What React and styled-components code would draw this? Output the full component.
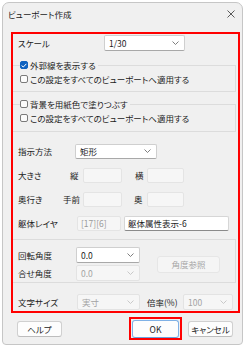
import styled, { createGlobalStyle } from "styled-components";

const GlobalStyle = createGlobalStyle`
  html, body {
    margin: 0;
    background: #ffffff;
  }
  body {
    font-family: "Noto Sans CJK JP", "Noto Sans", sans-serif;
    font-feature-settings: "palt";
    font-size: 8.5px;
    color: #1b1b1b;
  }
`;

const Window = styled.div`
  margin: 2px 0 0 2px;
  width: 241px;
  height: 343px;
  box-sizing: border-box;
  border: 1px solid #c6c6c6;
  border-radius: 7px 7px 4px 4px;
  background: #f0f0f0;
  display: flex;
  flex-direction: column;
  overflow: hidden;
`;

const TitleBar = styled.div`
  height: 29px;
  flex: none;
  display: flex;
  align-items: flex-start;
  justify-content: space-between;
  padding: 4px 6px 0 5px;
  box-sizing: border-box;
`;

const Title = styled.div`
  line-height: 14px;
  font-size: 8.5px;
`;

const CloseButton = styled.div`
  width: 10px;
  height: 10px;
  margin-top: 2px;
  display: flex;
  align-items: center;
  justify-content: center;
`;

const Highlight = styled.div`
  margin-left: 8px;
  width: 229px;
  box-sizing: border-box;
  border: 2px solid #ff0000;
  padding-bottom: 1px;
  display: flex;
  flex-direction: column;
`;

const Row = styled.div`
  display: flex;
  align-items: center;
  height: 16px;
  padding-left: 5px;
  margin-top: ${(p) => p.$top || 0}px;
`;

const Label = styled.span`
  width: ${(p) => p.$w}px;
  flex: none;
  margin-left: ${(p) => p.$ml || 0}px;
  white-space: nowrap;
  line-height: 14px;
`;

const Group = styled.fieldset`
  margin: ${(p) => p.$top}px 2px 0 0;
  padding: 0 0 ${(p) => p.$bottom}px 7px;
  border: 1px solid #dcdcdc;
  border-left: none;
  min-width: 0;
`;

const Legend = styled.legend`
  padding: 0 2px 0 0;
  height: 14px;
  display: flex;
  align-items: center;
`;

const CheckRow = styled.label`
  display: flex;
  align-items: center;
  height: 14px;
  white-space: nowrap;
`;

const Box = styled.span`
  width: 8px;
  height: 8px;
  flex: none;
  box-sizing: border-box;
  border-radius: 2px;
  margin-right: 2px;
  border: 1px solid ${(p) => (p.$checked ? "#0f62c0" : "#7a7a7a")};
  background: ${(p) => (p.$checked ? "#0f62c0" : "#fbfbfb")};
  display: flex;
  align-items: center;
  justify-content: center;
`;

const FormRows = styled.div`
  display: flex;
  flex-direction: column;
  gap: 8px;
  margin-top: 11px;
`;

const SelectBox = styled.div`
  width: ${(p) => p.$w}px;
  height: ${(p) => p.$h || 16}px;
  flex: none;
  box-sizing: border-box;
  display: flex;
  align-items: center;
  justify-content: space-between;
  padding: 0 5px 0 4px;
  border-radius: 2px;
  border: 1px solid ${(p) => (p.$disabled ? "#e3e3e3" : "#cfcfcf")};
  border-bottom-color: ${(p) => (p.$disabled ? "#e3e3e3" : "#a8a8a8")};
  background: ${(p) => (p.$disabled ? "#f6f6f6" : "#ffffff")};
  color: ${(p) => (p.$disabled ? "#a3a3a3" : "#1b1b1b")};
  margin-left: ${(p) => p.$ml || 0}px;
`;

const Field = styled.div`
  width: ${(p) => p.$w}px;
  height: 15px;
  flex: none;
  box-sizing: border-box;
  display: flex;
  align-items: center;
  padding-left: 3px;
  border-radius: 2px;
  border: 1px solid ${(p) => (p.$white ? "#d6d6d6" : "#e4e4e4")};
  border-bottom-color: ${(p) => (p.$white ? "#8a8a8a" : "#e4e4e4")};
  background: ${(p) => (p.$white ? "#ffffff" : "#f6f6f6")};
  color: ${(p) => (p.$dim ? "#9a9a9a" : "#1b1b1b")};
  margin-left: ${(p) => p.$ml || 0}px;
`;

const AngleGroup = styled.div`
  margin: 8px 2px 0 0;
  padding: 7px 0 1px 0;
  border: 1px solid #dcdcdc;
  border-left: none;
  display: grid;
  grid-template-columns: auto 1fr;
  align-items: center;
`;

const AngleRows = styled.div`
  display: flex;
  flex-direction: column;
  gap: 2px;
`;

const GhostButton = styled.div`
  width: 63px;
  height: 17px;
  margin-left: 17px;
  box-sizing: border-box;
  border: 1px solid #e6e6e6;
  border-radius: 3px;
  background: #f5f5f5;
  color: #a6a6a6;
  display: flex;
  align-items: center;
  justify-content: center;
`;

const Footer = styled.div`
  display: flex;
  align-items: center;
  padding: 4px 9px 0 14px;
`;

const Button = styled.div`
  width: ${(p) => p.$w}px;
  height: ${(p) => (p.$primary ? 18 : 16)}px;
  box-sizing: border-box;
  border: 1px solid ${(p) => (p.$primary ? "#7fb1e6" : "#d0d0d0")};
  border-bottom-color: ${(p) => (p.$primary ? "#6aa3df" : "#bdbdbd")};
  border-radius: 3px;
  background: #fdfdfd;
  display: flex;
  align-items: center;
  justify-content: center;
  margin-left: ${(p) => p.$ml || 0}px;
`;

const Spacer = styled.div`
  flex: 1;
`;

const FocusMark = styled.div`
  border: 2px solid #ff0000;
  padding: 0 1px;
  height: 23px;
  box-sizing: border-box;
  display: flex;
  align-items: center;
`;

function Chevron({ disabled }) {
  return (
    <svg width="7" height="4" viewBox="0 0 7 4">
      <polyline
        points="0.5,0.5 3.5,3.5 6.5,0.5"
        fill="none"
        stroke={disabled ? "#c4c4c4" : "#707070"}
        strokeWidth="0.9"
      />
    </svg>
  );
}

function Select({ value, width, disabled, ml, h }) {
  return (
    <SelectBox $w={width} $disabled={disabled} $ml={ml} $h={h}>
      <span>{value}</span>
      <Chevron disabled={disabled} />
    </SelectBox>
  );
}

function Check({ checked, children }) {
  return (
    <CheckRow>
      <Box $checked={checked}>
        {checked && (
          <svg width="6" height="5" viewBox="0 0 6 5">
            <polyline points="0.6,2.6 2.3,4 5.4,0.8" fill="none" stroke="#fff" strokeWidth="1" />
          </svg>
        )}
      </Box>
      {children}
    </CheckRow>
  );
}

export default function App() {
  return (
    <>
      <GlobalStyle />
      <Window>
        <TitleBar>
          <Title>ビューポート作成</Title>
          <CloseButton>
            <svg width="8" height="8" viewBox="0 0 8 8">
              <path d="M0.5 0.5 L7.5 7.5 M7.5 0.5 L0.5 7.5" stroke="#333" strokeWidth="0.8" />
            </svg>
          </CloseButton>
        </TitleBar>

        <Highlight>
          <Row $top={1}>
            <Label $w={86}>スケール</Label>
            <Select value="1/30" width={81} />
          </Row>

          <Group $top={7} $bottom={5}>
            <Legend>
              <Check checked>外郭線を表示する</Check>
            </Legend>
            <Check>この設定をすべてのビューポートへ適用する</Check>
          </Group>

          <Group $top={5} $bottom={6}>
            <Legend>
              <Check>背景を用紙色で塗りつぶす</Check>
            </Legend>
            <Check>この設定をすべてのビューポートへ適用する</Check>
          </Group>

          <FormRows>
            <Row>
              <Label $w={57}>指示方法</Label>
              <Select value="矩形" width={82} h={15} />
            </Row>
            <Row>
              <Label $w={52}>大きさ</Label>
              <Label $w={13}>縦</Label>
              <Field $w={39} />
              <Label $w={12} $ml={13}>横</Label>
              <Field $w={37} />
            </Row>
            <Row>
              <Label $w={45}>奥行き</Label>
              <Label $w={20}>手前</Label>
              <Field $w={39} />
              <Label $w={13} $ml={12}>奥</Label>
              <Field $w={37} />
            </Row>
            <Row>
              <Label $w={59}>躯体レイヤ</Label>
              <Field $w={44} $dim>[17][6]</Field>
              <Field $w={105} $white $ml={3}>躯体属性表示-6</Field>
            </Row>
          </FormRows>

          <AngleGroup>
            <AngleRows>
              <Row>
                <Label $w={58}>回転角度</Label>
                <Select value="0.0" width={64} />
              </Row>
              <Row>
                <Label $w={58}>合せ角度</Label>
                <Select value="0.0" width={64} disabled />
              </Row>
            </AngleRows>
            <GhostButton>角度参照</GhostButton>
          </AngleGroup>

          <Row $top={11}>
            <Label $w={59}>文字サイズ</Label>
            <Select value="実寸" width={63} disabled />
            <Label $w={36} $ml={7}>倍率(%)</Label>
            <Select value="100" width={50} disabled />
          </Row>
        </Highlight>

        <Footer>
          <Button $w={45}>ヘルプ</Button>
          <Spacer />
          <FocusMark>
            <Button $w={47} $primary>OK</Button>
          </FocusMark>
          <Button $w={45} $ml={6}>キャンセル</Button>
        </Footer>
      </Window>
    </>
  );
}
